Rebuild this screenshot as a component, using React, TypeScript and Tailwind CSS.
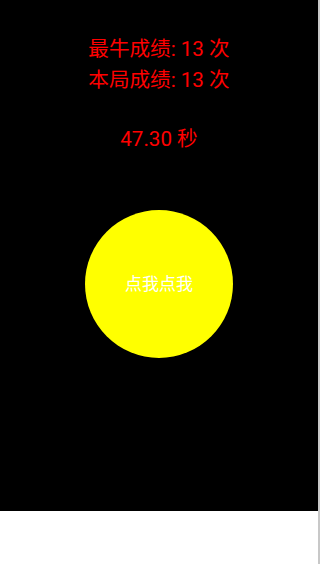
export default function App() {
  return (
    <div className="flex h-[564px] w-[320px] bg-white" style={{ fontFamily: 'Roboto, "Noto Sans CJK SC", sans-serif' }}>
      <div className="flex h-[511px] w-[318px] flex-col items-center bg-black pt-[34px] text-[20.6px] leading-[31px] text-[#ff0000]">
        <p>最牛成绩: 13 次</p>
        <p>本局成绩: 13 次</p>
        <p className="mt-[28px]">47.30 秒</p>
        <button
          type="button"
          className="mt-[55px] flex h-[148px] w-[148px] items-center justify-center rounded-full bg-[#ffff00] text-[17px] text-white"
        >
          点我点我
        </button>
      </div>
      <div className="h-full w-[2px] bg-[#c8c8c8]" />
    </div>
  )
}
